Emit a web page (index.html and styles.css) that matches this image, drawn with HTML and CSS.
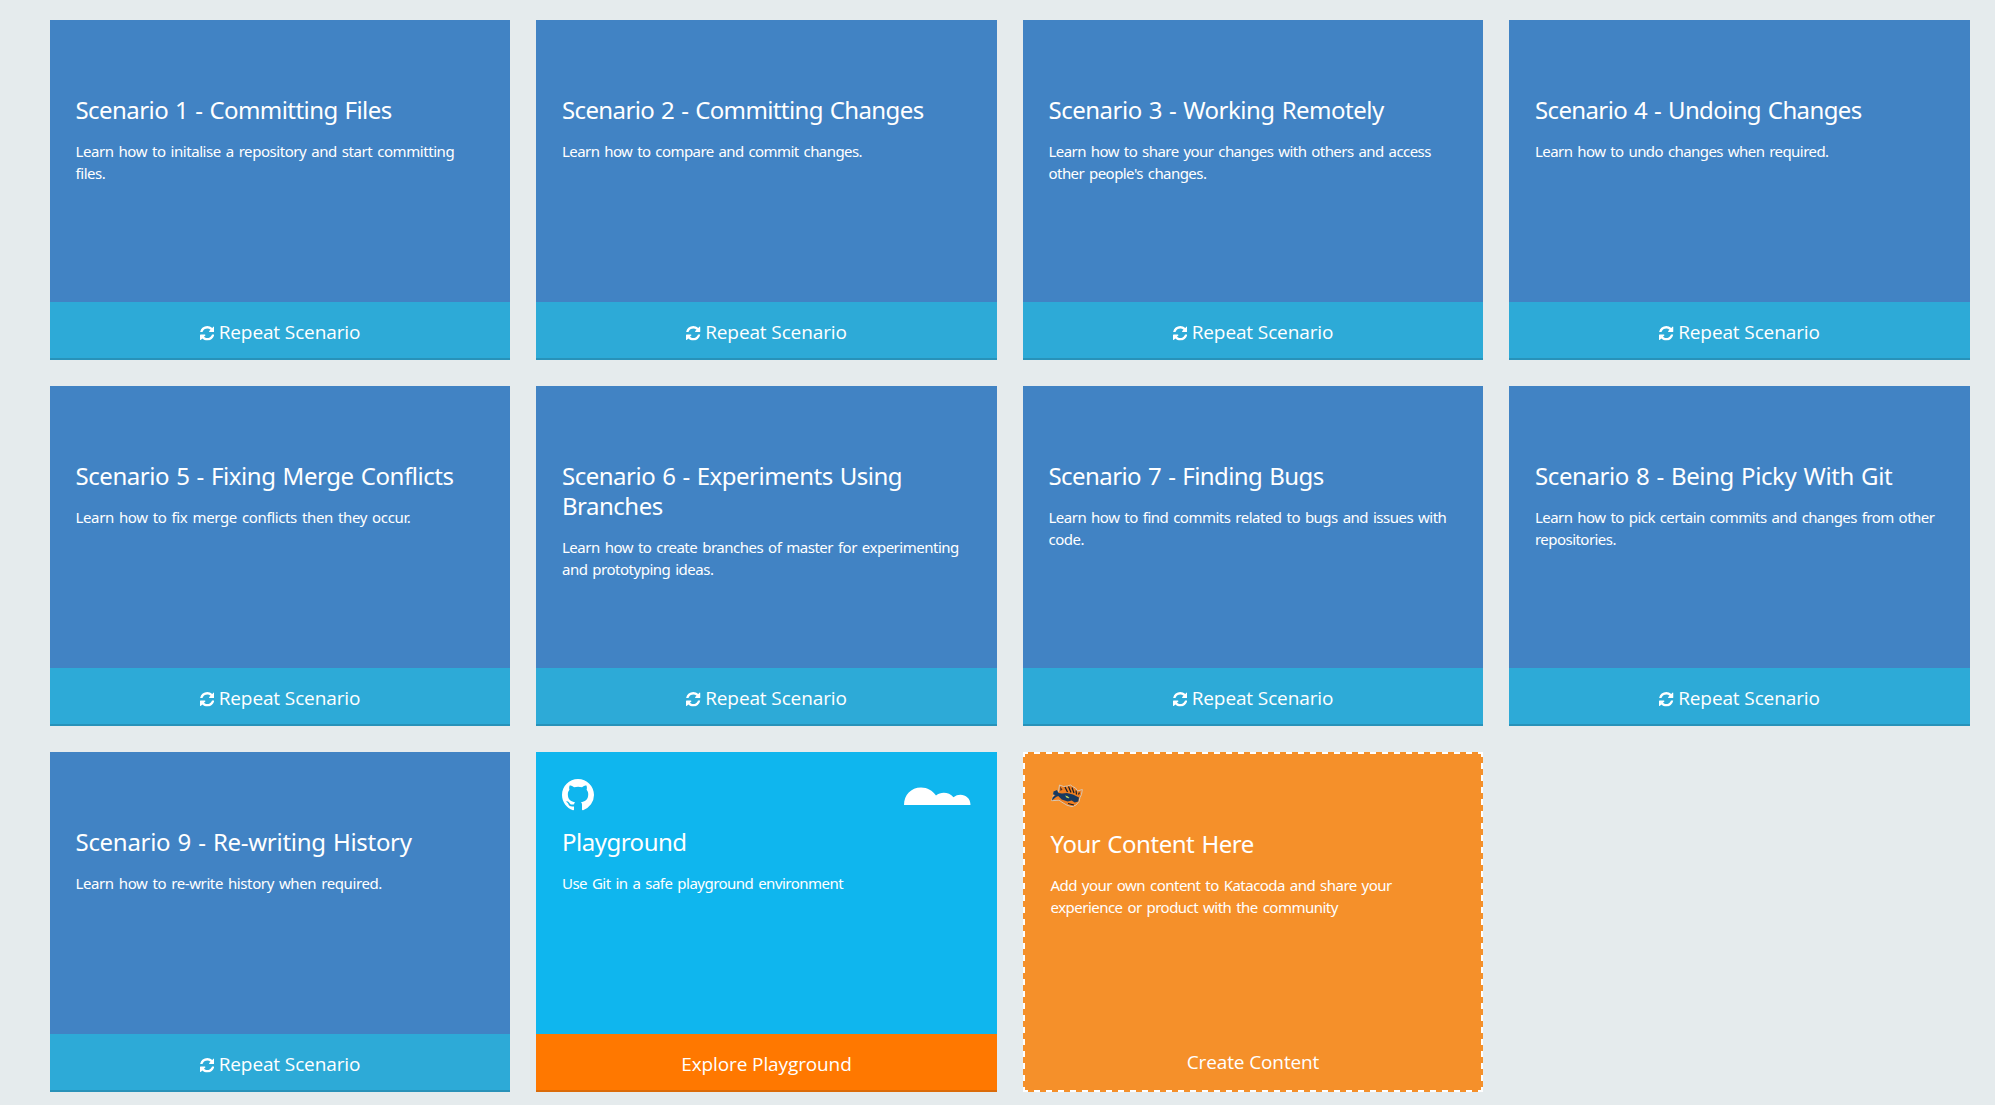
FILE: index.html
```html
<!DOCTYPE html>
<html lang="en">
<head>
<meta charset="utf-8">
<title>Scenarios</title>
<link rel="stylesheet" href="styles.css">
</head>
<body>
<svg class="sprite" aria-hidden="true">
  <symbol id="refresh" viewBox="0 0 1536 1536"><path d="M1511 928q0 5-1 7-64 268-268 434.500T764 1536q-146 0-282.500-55T238 1324l-129 129q-19 19-45 19t-45-19-19-45V960q0-26 19-45t45-19h448q26 0 45 19t19 45-19 45l-137 137q71 66 161 102t187 36q134 0 250-65t186-179q11-17 53-117 8-23 30-23h192q13 0 22.500 9.500t9.500 22.500zm25-800v448q0 26-19 45t-45 19h-448q-26 0-45-19t-19-45 19-45l138-138Q969 256 768 256q-134 0-250 65T332 500q-11 17-53 117-8 23-30 23H50q-13 0-22.500-9.500T18 608v-7q65-268 270-434.500T768 0q146 0 284 55.500T1297 212l130-129q19-19 45-19t45 19 19 45z"/></symbol>
</svg>
<main class="grid">
  <article class="card"><div class="body"><h2 class="title">Scenario 1 - Committing Files</h2><p class="text">Learn how to initalise a repository and start committing<br>files.</p></div><a class="action"><svg class="icon"><use href="#refresh"/></svg>Repeat Scenario</a></article>
  <article class="card"><div class="body"><h2 class="title">Scenario 2 - Committing Changes</h2><p class="text">Learn how to compare and commit changes.</p></div><a class="action"><svg class="icon"><use href="#refresh"/></svg>Repeat Scenario</a></article>
  <article class="card"><div class="body"><h2 class="title">Scenario 3 - Working Remotely</h2><p class="text">Learn how to share your changes with others and access<br>other people's changes.</p></div><a class="action"><svg class="icon"><use href="#refresh"/></svg>Repeat Scenario</a></article>
  <article class="card"><div class="body"><h2 class="title">Scenario 4 - Undoing Changes</h2><p class="text">Learn how to undo changes when required.</p></div><a class="action"><svg class="icon"><use href="#refresh"/></svg>Repeat Scenario</a></article>
  <article class="card"><div class="body"><h2 class="title">Scenario 5 - Fixing Merge Conflicts</h2><p class="text">Learn how to fix merge conflicts then they occur.</p></div><a class="action"><svg class="icon"><use href="#refresh"/></svg>Repeat Scenario</a></article>
  <article class="card"><div class="body"><h2 class="title">Scenario 6 - Experiments Using<br>Branches</h2><p class="text">Learn how to create branches of master for experimenting<br>and prototyping ideas.</p></div><a class="action"><svg class="icon"><use href="#refresh"/></svg>Repeat Scenario</a></article>
  <article class="card"><div class="body"><h2 class="title">Scenario 7 - Finding Bugs</h2><p class="text">Learn how to find commits related to bugs and issues with<br>code.</p></div><a class="action"><svg class="icon"><use href="#refresh"/></svg>Repeat Scenario</a></article>
  <article class="card"><div class="body"><h2 class="title">Scenario 8 - Being Picky With Git</h2><p class="text">Learn how to pick certain commits and changes from other<br>repositories.</p></div><a class="action"><svg class="icon"><use href="#refresh"/></svg>Repeat Scenario</a></article>
  <article class="card"><div class="body"><h2 class="title">Scenario 9 - Re-writing History</h2><p class="text">Learn how to re-write history when required.</p></div><a class="action"><svg class="icon"><use href="#refresh"/></svg>Repeat Scenario</a></article>
  <article class="card playground">
    <div class="body">
      <div class="logos">
        <svg class="github" viewBox="0 0 16 16"><path d="M8 0C3.580 0 0 3.580 0 8c0 3.540 2.290 6.530 5.470 7.590.4.070.55-.17.55-.38 0-.19-.01-.82-.01-1.490-2.010.37-2.530-.49-2.690-.94-.09-.23-.48-.94-.82-1.130-.28-.15-.68-.52-.01-.53.63-.01 1.080.58 1.230.82.72 1.210 1.870.87 2.330.66.070-.52.28-.87.51-1.070-1.780-.2-3.640-.89-3.640-3.950 0-.87.31-1.590.82-2.150-.08-.2-.36-1.020.08-2.120 0 0 .67-.21 2.200.82.640-.18 1.320-.27 2-.27s1.360.09 2 .27c1.530-1.040 2.200-.82 2.200-.82.440 1.100.160 1.920.080 2.120.510.560.820 1.270.820 2.150 0 3.070-1.870 3.750-3.650 3.950.290.250.540.730.540 1.480 0 1.070-.01 1.930-.01 2.200 0 .210.150.460.550.380A8.010 8.010 0 0 0 16 8c0-4.420-3.580-8-8-8z"/></svg>
        <svg class="cloud" viewBox="0 0 67 18"><path d="M0 18C0 8 7 0.500 17 0.500c6.500 0 11.500 3 15 8 5-4 13-3.500 17.500 1.800C56 5 66.500 8.500 66.500 18z"/></svg>
      </div>
      <h2 class="title">Playground</h2><p class="text">Use Git in a safe playground environment</p>
    </div>
    <a class="action">Explore Playground</a>
  </article>
  <article class="card create">
    <div class="body">
      <div class="logos">
        <svg class="cat" viewBox="11 14 32 24">
          <path d="M19.500 15l4 1.500 4-.5 3-1 2 1.500 3 1.500 2 3 4.800-1.500-.8 5-1.500 3-1 4-3 3.500-4 1.700-5-1.500-5-3-3-2-7.300.5 1.300-4 1-4.500 3-1 1.500.3z" fill="#ef7f21" stroke="#d9c7b2" stroke-width="1"/>
          <path d="M13.500 21.500l3.500-1.500 1.500 3 3.500.5 5-.5 6 1.500 6 3-.8 4-3.500 1-3-2-4 1-6-2-3.500-3.500-2.200 1-4 3.500.5-3 3-2.500-2.500-.5z" fill="#17395f"/>
          <path d="M25 25.500q3 0 4.500 2.500-3 .8-4.500-2.500z" fill="#c9d75a"/>
          <path d="M20 16.500l2.500 3-2 1.500z" fill="#5b3420"/>
          <path d="M25 17l2.500 5M28.500 16.500l2.500 6M32 17.500l2 5.500M36 20.500l.5 4M28 33.500l6 1.500M39.500 22.500l-1 2" fill="none" stroke="#171c25" stroke-width="1.200"/>
        </svg>
      </div>
      <h2 class="title">Your Content Here</h2><p class="text">Add your own content to Katacoda and share your<br>experience or product with the community</p>
    </div>
    <a class="action">Create Content</a>
  </article>
</main>
</body>
</html>
```
FILE: styles.css
```css
* { box-sizing: border-box; }
body { margin: 0; background: #e5ebed; font-family: "Noto Sans", "Open Sans", sans-serif; color: #fff; }
.sprite { display: none; }
.grid { display: grid; grid-template-columns: 460px 461px 460px 461px; grid-auto-rows: 340px; gap: 26px; padding: 20px 25px 13px 50px; }
.card { --track: 0px; --text-track: 0px; display: flex; flex-direction: column; background: #4183c4; min-width: 0; }
.body { flex: 1; padding: 75px 0 0 25.500px; white-space: nowrap; }
.card:nth-child(even) .body { padding-left: 26px; }
.title { margin: 0 0 15px; font-size: 24px; line-height: 30px; font-weight: 400; letter-spacing: calc(-0.5px + var(--track)); word-spacing: 1.300px; }
.text { margin: 0; font-size: 15px; line-height: 22px; letter-spacing: calc(-0.5px + var(--text-track)); word-spacing: 1.500px; }

.card:nth-child(1) { --track: -0.065px; --text-track: 0.06px; }
.card:nth-child(2) { --track: -0.12px; --text-track: -0.07px; }
.card:nth-child(3) { --text-track: -0.05px; }
.card:nth-child(4) { --track: -0.135px; --text-track: -0.06px; }
.card:nth-child(5) { --track: 0.06px; --text-track: 0.14px; }
.card:nth-child(6) { --text-track: 0.01px; }
.card:nth-child(7) { --track: -0.075px; }
.card:nth-child(8) { --track: 0.1px; --text-track: -0.04px; }
.card:nth-child(9) { --track: 0.21px; --text-track: 0.11px; }
.card:nth-child(10) { --text-track: -0.015px; }
.card:nth-child(11) { --track: 0.035px; --text-track: -0.02px; }

.action { display: flex; align-items: center; justify-content: center; height: 58px; padding-top: 3px; border-bottom: 2px solid #2892b9; background: #2daad7; font-family: "Open Sans", sans-serif; font-size: 19px; line-height: 26px; letter-spacing: -0.12px; }
.icon { width: 14.500px; height: 14.500px; margin: 4px 4.500px 0 0; fill: currentColor; }
.logos { display: flex; justify-content: space-between; height: 48px; padding-right: 26px; }
.playground { background: #0fb6ee; }
.playground .body, .create .body { padding-top: 27px; }
.github { width: 32px; height: 32px; fill: #fff; }
.cloud { width: 67px; height: 18px; margin-top: 8px; fill: #fff; }
.playground .action { background: #ff7800; border-color: #db6b09; }
.create {
  --dash: #fff 0 6px, transparent 6px 12px;
  padding: 2px;
  background:
    linear-gradient(90deg, var(--dash)) -1px 0 / 12px 2px repeat-x,
    linear-gradient(90deg, var(--dash)) -1px 100% / 12px 2px repeat-x,
    linear-gradient(180deg, var(--dash)) 0 -1px / 2px 12px repeat-y,
    linear-gradient(180deg, var(--dash)) 100% -1px / 2px 12px repeat-y,
    #f5902a;
}
.cat { width: 32px; height: 24px; margin: 3px 0 0 0.500px; }
.create .action { background: none; border: 0; padding-top: 2px; }
```
